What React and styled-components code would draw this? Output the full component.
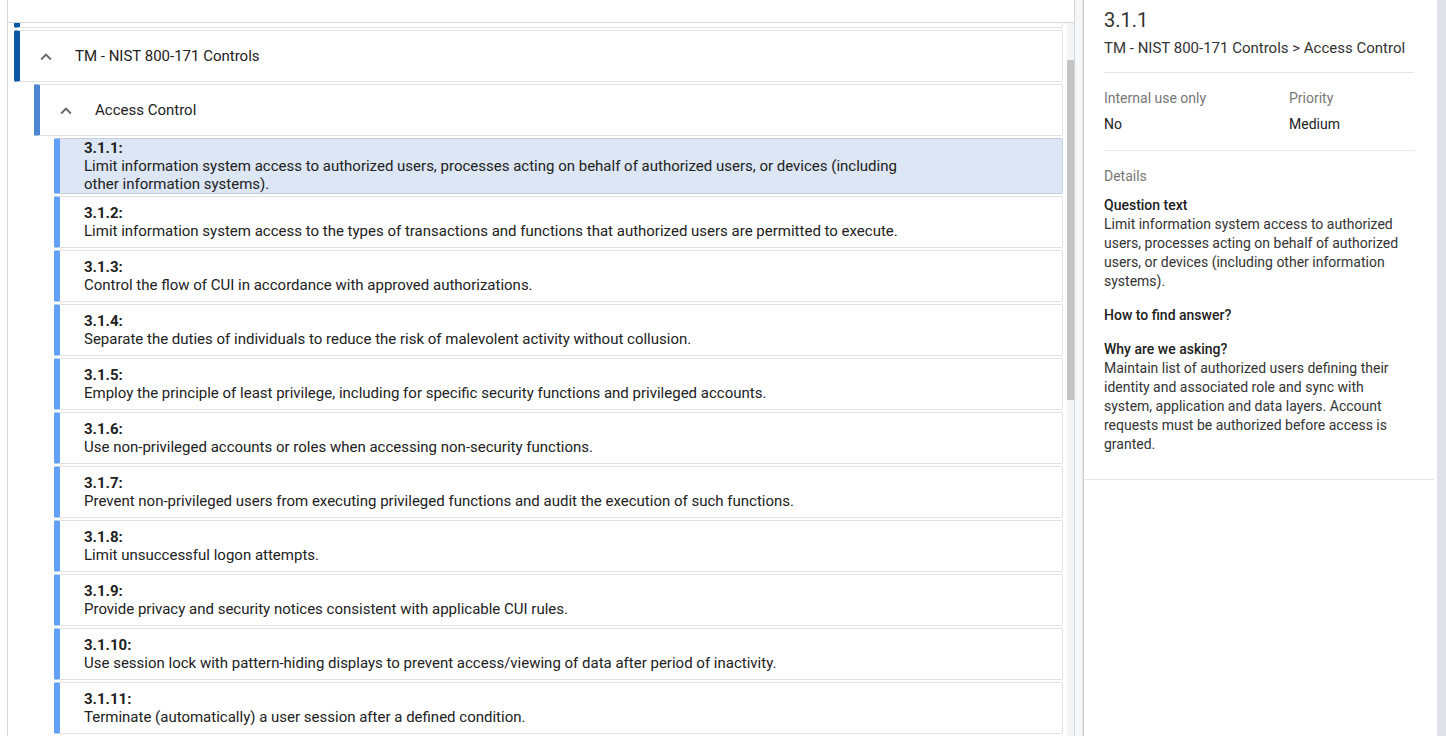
import React from 'react';
import styled, { createGlobalStyle } from 'styled-components';

const GlobalStyle = createGlobalStyle`
  html, body {
    margin: 0;
    padding: 0;
    background: #ffffff;
  }
  body {
    font-family: Roboto, "Liberation Sans", Arial, sans-serif;
    color: #212121;
  }
  * {
    box-sizing: border-box;
  }
`;

const controls = [
  {
    id: '3.1.1',
    text: 'Limit information system access to authorized users, processes acting on behalf of authorized users, or devices (including other information systems).',
  },
  {
    id: '3.1.2',
    text: 'Limit information system access to the types of transactions and functions that authorized users are permitted to execute.',
  },
  { id: '3.1.3', text: 'Control the flow of CUI in accordance with approved authorizations.' },
  {
    id: '3.1.4',
    text: 'Separate the duties of individuals to reduce the risk of malevolent activity without collusion.',
  },
  {
    id: '3.1.5',
    text: 'Employ the principle of least privilege, including for specific security functions and privileged accounts.',
  },
  { id: '3.1.6', text: 'Use non-privileged accounts or roles when accessing non-security functions.' },
  {
    id: '3.1.7',
    text: 'Prevent non-privileged users from executing privileged functions and audit the execution of such functions.',
  },
  { id: '3.1.8', text: 'Limit unsuccessful logon attempts.' },
  { id: '3.1.9', text: 'Provide privacy and security notices consistent with applicable CUI rules.' },
  {
    id: '3.1.10',
    text: 'Use session lock with pattern-hiding displays to prevent access/viewing of data after period of inactivity.',
  },
  { id: '3.1.11', text: 'Terminate (automatically) a user session after a defined condition.' },
];

const ChevronUp = () => (
  <svg width="22" height="22" viewBox="0 0 24 24" aria-hidden="true">
    <path d="M12 8l-6 6 1.41 1.41L12 10.83l4.59 4.58L18 14z" fill="#666666" />
  </svg>
);

const App = () => {
  const selected = '3.1.1';

  return (
    <>
      <GlobalStyle />
      <Page>
        <LeftPanel>
          <Header />
          <ListArea>
            <List>
              <PrevFragment />
              <GroupRow $bar="#0a58a3" $indent={6}>
                <ChevronBox>
                  <ChevronUp />
                </ChevronBox>
                <GroupTitle>TM - NIST 800-171 Controls</GroupTitle>
              </GroupRow>
              <GroupRow $bar="#4c86d1" $indent={26}>
                <ChevronBox>
                  <ChevronUp />
                </ChevronBox>
                <GroupTitle>Access Control</GroupTitle>
              </GroupRow>
              {controls.map((c) => (
                <ControlRow key={c.id} $active={c.id === selected}>
                  <ControlText>
                    <ControlId>{c.id}:</ControlId>
                    <ControlDesc>{c.text}</ControlDesc>
                  </ControlText>
                </ControlRow>
              ))}
            </List>
            <ScrollTrack>
              <ScrollThumb />
            </ScrollTrack>
          </ListArea>
        </LeftPanel>

        <Gutter />

        <RightPanel>
          <DetailTitle>3.1.1</DetailTitle>
          <Breadcrumb>TM - NIST 800-171 Controls &gt; Access Control</Breadcrumb>
          <Divider />
          <FieldGrid>
            <FieldLabel>Internal use only</FieldLabel>
            <FieldLabel>Priority</FieldLabel>
            <FieldValue>No</FieldValue>
            <FieldValue>Medium</FieldValue>
          </FieldGrid>
          <Divider />
          <SectionLabel>Details</SectionLabel>
          <BlockTitle $gap={10}>Question text</BlockTitle>
          <BlockBody>
            Limit information system access to authorized users, processes acting on behalf of authorized
            users, or devices (including other information systems).
          </BlockBody>
          <BlockTitle $gap={15}>How to find answer?</BlockTitle>
          <BlockTitle $gap={15}>Why are we asking?</BlockTitle>
          <BlockBody>
            Maintain list of authorized users defining their identity and associated role and sync with
            system, application and data layers. Account requests must be authorized before access is
            granted.
          </BlockBody>
          <BottomDivider />
        </RightPanel>

        <OuterEdge />
      </Page>
    </>
  );
};

export default App;

const Page = styled.div`
  display: flex;
  height: 736px;
  overflow: hidden;
  padding-left: 7px;
  background: #ffffff;
`;

const LeftPanel = styled.div`
  width: 1068px;
  flex-shrink: 0;
  display: flex;
  flex-direction: column;
  border-left: 1px solid #dadada;
  border-right: 1px solid #d4d4d4;
  background: #ffffff;
`;

const Header = styled.div`
  height: 23px;
  flex-shrink: 0;
  border-bottom: 1px solid #d8d8d8;
  background: #ffffff;
`;

const ListArea = styled.div`
  flex: 1;
  display: flex;
  min-height: 0;
`;

const List = styled.div`
  flex: 1;
  display: flex;
  flex-direction: column;
  gap: 2px;
  padding: 0 4px 0 6px;
  overflow: hidden;
`;

const PrevFragment = styled.div`
  height: 5px;
  flex-shrink: 0;
  border: 1px solid #e2e2e2;
  border-top: none;
  border-left: 6px solid #0a58a3;
  border-radius: 0 0 2px 2px;
`;

const GroupRow = styled.div`
  height: 52px;
  flex-shrink: 0;
  margin-left: ${(p) => p.$indent - 6}px;
  display: flex;
  align-items: center;
  border: 1px solid #e2e2e2;
  border-left: 6px solid ${(p) => p.$bar};
  border-radius: 2px;
  background: #ffffff;
  padding-left: 15px;
`;

const ChevronBox = styled.span`
  display: flex;
  align-items: center;
  justify-content: center;
  width: 22px;
  height: 22px;
  margin-right: 18px;
  margin-top: 2px;
`;

const GroupTitle = styled.span`
  font-size: 15px;
  color: #212121;
`;

const ControlRow = styled.div`
  min-height: 52px;
  flex-shrink: 0;
  margin-left: 40px;
  display: flex;
  align-items: center;
  border: 1px solid ${(p) => (p.$active ? '#c3cde0' : '#e2e2e2')};
  border-left: 6px solid #62a0f8;
  border-radius: 2px;
  background: ${(p) => (p.$active ? '#dde6f4' : '#ffffff')};
  padding-left: 24px;
`;

const ControlText = styled.div`
  max-width: 830px;
  font-size: 15px;
  line-height: 18px;
  color: #212121;
`;

const ControlId = styled.div`
  font-weight: 700;
`;

const ControlDesc = styled.div``;

const ScrollTrack = styled.div`
  width: 7px;
  flex-shrink: 0;
  background: #f4f5f7;
  padding-top: 37px;
`;

const ScrollThumb = styled.div`
  height: 340px;
  background: #c4c4c4;
`;

const Gutter = styled.div`
  width: 8px;
  flex-shrink: 0;
  background: #f6f7f9;
`;

const RightPanel = styled.div`
  width: 354px;
  flex-shrink: 0;
  border-left: 1px solid #cfcfcf;
  box-shadow: -1px 0 0 #e4e4e4;
  background: #ffffff;
  padding: 8px 23px 0 20px;
  display: flex;
  flex-direction: column;
`;

const DetailTitle = styled.div`
  font-size: 20px;
  line-height: 24px;
  color: #333333;
`;

const Breadcrumb = styled.div`
  margin-top: 6px;
  font-size: 15px;
  line-height: 20px;
  color: #333333;
`;

const Divider = styled.div`
  height: 1px;
  margin-top: 14px;
  background: #e6e6e6;
`;

const FieldGrid = styled.div`
  display: grid;
  grid-template-columns: 185px 1fr;
  row-gap: 6px;
  padding-top: 15px;
  padding-bottom: 2px;
`;

const FieldLabel = styled.div`
  font-size: 14px;
  line-height: 20px;
  color: #777777;
`;

const FieldValue = styled.div`
  font-size: 14px;
  line-height: 20px;
  color: #212121;
`;

const SectionLabel = styled.div`
  margin-top: 15px;
  font-size: 14px;
  line-height: 20px;
  color: #777777;
`;

const BlockTitle = styled.div`
  margin-top: ${(p) => p.$gap}px;
  font-size: 14px;
  line-height: 19px;
  font-weight: 500;
  color: #212121;
`;

const BlockBody = styled.div`
  font-size: 14px;
  line-height: 19px;
  color: #333333;
`;

const BottomDivider = styled.div`
  height: 1px;
  margin: 25px -20px 0 -20px;
  background: #e6e6e6;
`;

const OuterEdge = styled.div`
  flex: 1;
  background: #dee1e5;
`;
